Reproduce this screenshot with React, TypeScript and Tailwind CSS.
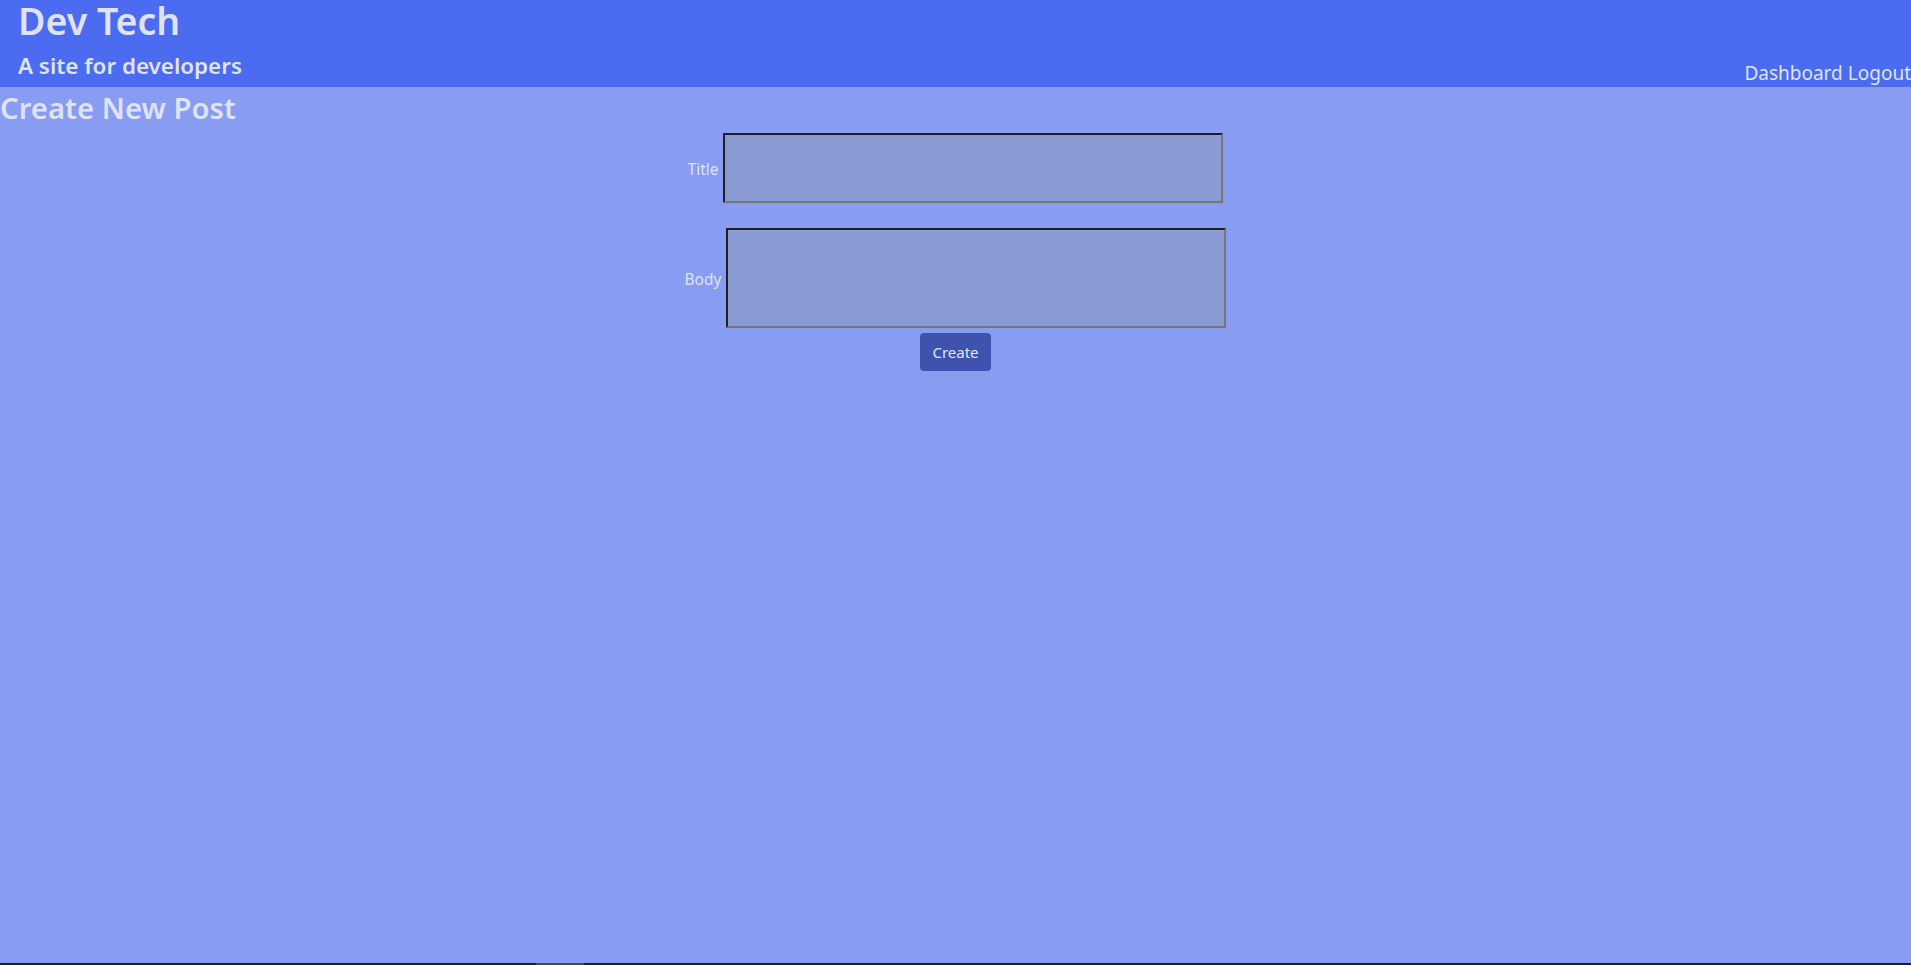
import React from "react";

// Create-post page: top banner, page heading, centered form
const Header = () => (
  <header className="flex h-[87px] justify-between bg-[#4b6bf0] text-[#dfe3f6]">
    <div className="pl-[18px]">
      <h1 className="text-[37.5px] font-semibold leading-[42px]">Dev Tech</h1>
      <h3 className="mt-[9px] text-[22.4px] font-semibold leading-[30px]">A site for developers</h3>
    </div>
    <nav className="flex gap-[5px] self-end text-[19px] leading-[28px]">
      <a href="#">Dashboard</a>
      <a href="#">Logout</a>
    </nav>
  </header>
);

const PostForm = () => (
  <form className="flex flex-col items-center text-[15.5px] text-[#dfe3f6]">
    <label className="flex items-center gap-[5px]">
      <span className="pt-[4px]">Title</span>
      <input
        type="text"
        className="h-[70px] w-[500px] border-2 border-b-[#767676] border-l-[#1f1f1f] border-r-[#767676] border-t-[#1f1f1f] bg-[#8a9ad2] outline-none"
      />
    </label>
    <label className="mt-[25px] flex items-center gap-[5px]">
      <span className="pt-[4px]">Body</span>
      <textarea className="h-[100px] w-[500px] resize-none border-2 border-b-[#767676] border-l-[#1f1f1f] border-r-[#767676] border-t-[#1f1f1f] bg-[#8a9ad2] outline-none" />
    </label>
    <button
      type="button"
      className="mt-[5px] h-[38px] w-[71px] rounded-[4px] bg-[#3f53ae] text-[15px] text-[#dfe6ff]"
    >
      Create
    </button>
  </form>
);

export default function App() {
  return (
    <div className="flex h-screen flex-col bg-[#889cf2] font-['Noto_Sans',sans-serif]">
      <Header />
      <main className="flex-1">
        <h2 className="mt-[2px] text-[29.3px] font-semibold leading-[38px] text-[#dfe3f6]">Create New Post</h2>
        <div className="mt-[6px]">
          <PostForm />
        </div>
      </main>
      {/* strip along the bottom edge of the window */}
      <div className="flex h-[2px] bg-[#1e1e1e]">
        <div className="ml-[536px] w-[48px] bg-[#4a4a4a]" />
      </div>
    </div>
  );
}
